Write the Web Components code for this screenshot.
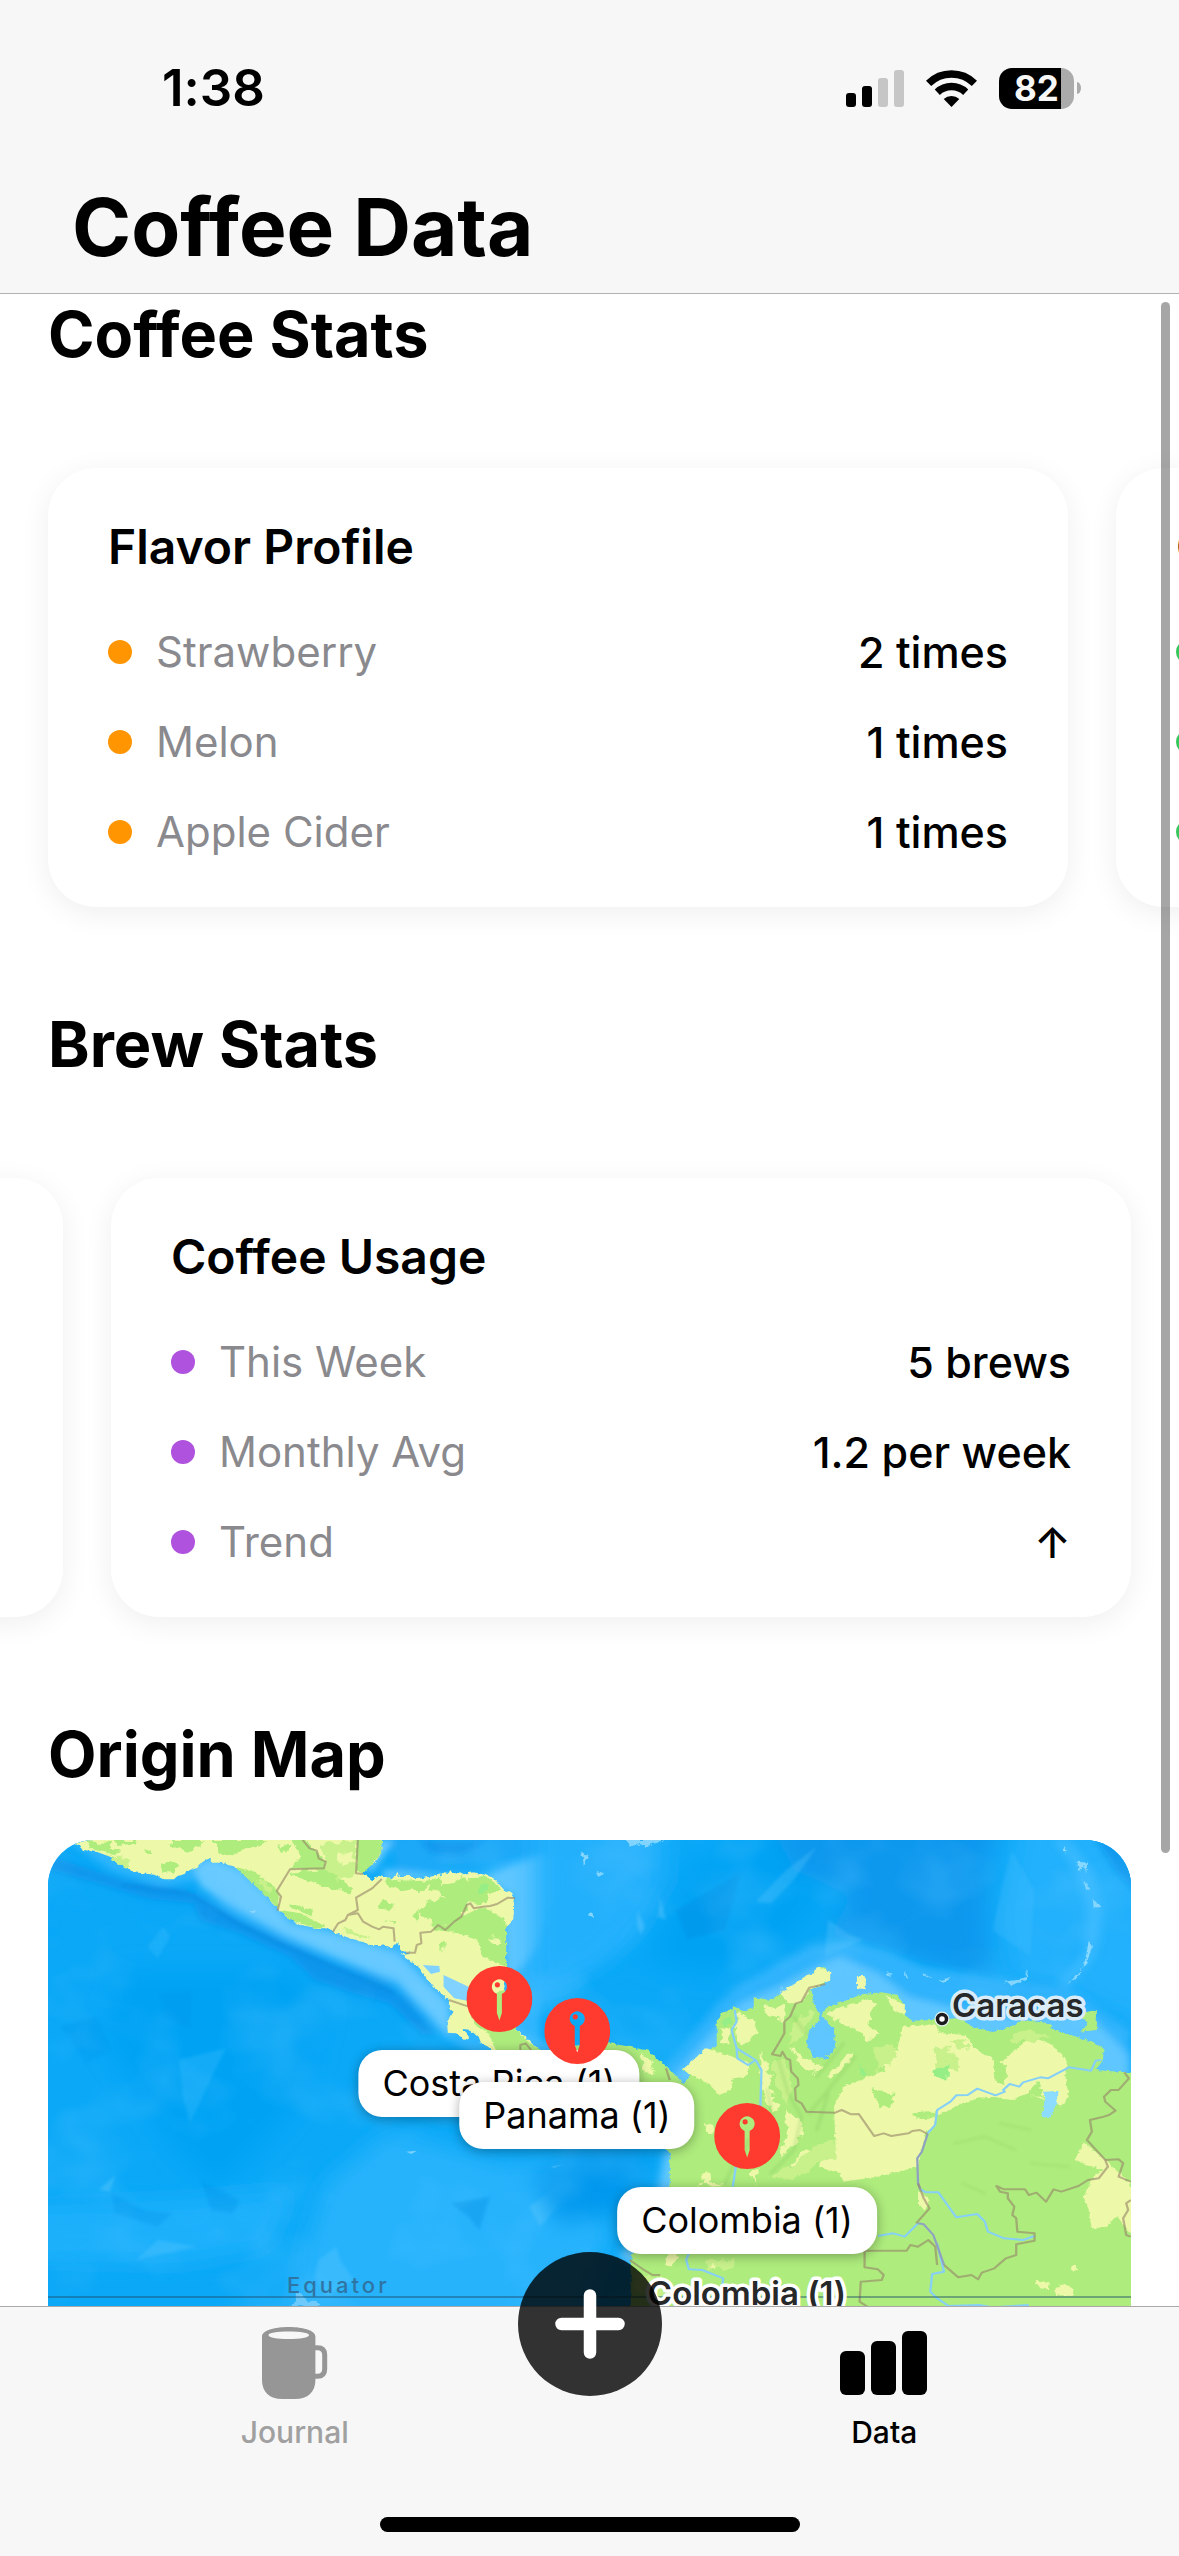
<!DOCTYPE html>
<html lang="en">
<head>
<meta charset="utf-8">
<meta name="viewport" content="width=device-width, initial-scale=1">
<title>Coffee Data</title>
<style>
  html, body { margin: 0; height: 100%; }
  body { font-family: Inter, "Liberation Sans", sans-serif; font-variant-ligatures: none; color: #000; background: #fff; }
</style>
</head>
<body>
<coffee-app></coffee-app>

<template id="t-app">
  <style>
    :host { display: flex; flex-direction: column; height: 100vh; overflow: hidden; background: #fff; }
    header { background: #f7f7f7; border-bottom: 1px solid #b2b2b2; }
    h1 { margin: 0; padding: 0 72px 15px; font-size: 80px; line-height: 102px; font-weight: 700; }
    main { position: relative; flex: 1; min-height: 0; overflow: hidden; }
    .thumb { position: absolute; top: 8px; right: 9px; width: 9px; height: 1551px; border-radius: 5px; background: rgba(0,0,0,.35); }
  </style>
  <header>
    <status-bar></status-bar>
    <h1>Coffee Data</h1>
  </header>
  <main>
    <data-section heading="Coffee Stats">
      <card-carousel>
        <stat-card heading="Flavor Profile" color="#ff9500">
          <stat-row label="Strawberry" value="2 times"></stat-row>
          <stat-row label="Melon" value="1 times"></stat-row>
          <stat-row label="Apple Cider" value="1 times"></stat-row>
        </stat-card>
        <stat-card heading="Origins" color="#34c759">
          <stat-row></stat-row><stat-row></stat-row><stat-row></stat-row>
        </stat-card>
      </card-carousel>
    </data-section>
    <data-section heading="Brew Stats">
      <card-carousel at="end">
        <stat-card></stat-card>
        <stat-card heading="Coffee Usage" color="#af52de">
          <stat-row label="This Week" value="5 brews"></stat-row>
          <stat-row label="Monthly Avg" value="1.2 per week"></stat-row>
          <stat-row label="Trend" value="↑"></stat-row>
        </stat-card>
      </card-carousel>
    </data-section>
    <data-section heading="Origin Map">
      <origin-map>
        <map-pin style="--x:451px;--y:126px">Costa Rica (1)</map-pin>
        <map-pin style="--x:529px;--y:158px">Panama (1)</map-pin>
        <map-pin style="--x:699px;--y:263px">Colombia (1)</map-pin>
      </origin-map>
    </data-section>
    <div class="thumb"></div>
  </main>
  <tab-bar></tab-bar>
</template>

<template id="t-status">
  <style>
    :host { display: flex; align-items: center; justify-content: space-between; height: 176px; padding: 0 98px 0 162px; }
    .time { font-size: 51px; line-height: 60px; font-weight: 600; }
    .icons { display: flex; align-items: center; gap: 22px; }
    .battery { display: flex; align-items: center; gap: 3px; }
    .cell { width: 75px; height: 41px; border-radius: 13px; background: linear-gradient(90deg, #000 62px, #ababab 62px); color: #f7f7f7; font-size: 35px; line-height: 41px; font-weight: 700; text-align: center; }
    .nub { width: 4px; height: 12px; border-radius: 0 4px 4px 0 / 0 6px 6px 0; background: #ababab; }
    svg { display: block; }
  </style>
  <div class="time">1:38</div>
  <div class="icons">
    <svg width="58" height="37" viewBox="0 0 58 37" aria-hidden="true">
      <rect y="23" width="10" height="14" rx="3"/><rect x="16" y="16" width="10" height="21" rx="3"/>
      <rect x="32" y="8" width="10" height="29" rx="3" fill="#c6c6c6"/><rect x="48" width="10" height="37" rx="3" fill="#c6c6c6"/>
    </svg>
    <svg width="51" height="37" viewBox="0 0 51 37" aria-hidden="true">
      <g fill="none" stroke="#000" stroke-width="7.4">
        <path d="M2.6 13.4A32.6 32.6 0 0 1 48.4 13.4"/><path d="M11.3 22.2A20.6 20.6 0 0 1 39.700 22.200"/>
      </g>
      <path d="M25.500 37L17.700 29A11.500 11.500 0 0 1 33.300 29Z"/>
    </svg>
    <div class="battery"><div class="cell">82</div><div class="nub"></div></div>
  </div>
</template>

<template id="t-section">
  <style>
    :host { display: block; padding-bottom: 96px; }
    h2 { margin: 0; padding: 0 48px; font-size: 63px; line-height: 80px; font-weight: 700; }
  </style>
  <h2></h2>
  <slot></slot>
</template>

<template id="t-carousel">
  <style>
    :host { display: flex; gap: 48px; padding: 94px 48px 61px; margin-bottom: -60px; overflow: hidden; }
    :host([at="end"]) { justify-content: flex-end; }
  </style>
  <slot></slot>
</template>

<template id="t-card">
  <style>
    :host { display: flex; flex-direction: column; flex: 0 0 calc(100% - 63px); box-sizing: border-box; padding: 48px 60px; border-radius: 48px; background: #fff; box-shadow: 0 6px 30px rgba(0,0,0,.065); }
    h3 { margin: 0 0 48px; font-size: 48px; line-height: 61px; font-weight: 600; }
    .rows { display: flex; flex-direction: column; gap: 36px; }
  </style>
  <h3></h3>
  <div class="rows"><slot></slot></div>
</template>

<template id="t-row">
  <style>
    :host { display: flex; align-items: center; height: 54px; font-size: 43px; line-height: 54px; }
    i { width: 24px; height: 24px; border-radius: 50%; background: var(--dot); margin-right: 24px; }
    .label { flex: 1; color: #8a8a8e; font-size: 42px; }
    .value { font-weight: 500; }
  </style>
  <i></i><span class="label"></span><span class="value"></span>
</template>

<template id="t-pin">
  <style>
    :host { position: absolute; left: var(--x); top: var(--y); transform: translateX(-50%); display: flex; flex-direction: column; align-items: center; gap: 18px; }
    span { padding: 0 24px; border-radius: 24px; background: #fff; font-size: 36px; line-height: 67px; white-space: nowrap; box-shadow: 0 2px 12px rgba(0,0,0,.33); }
    svg { display: block; }
  </style>
  <svg width="66" height="66" viewBox="-33 -33 66 66" aria-hidden="true">
    <path fill="#ff3b30" fill-rule="evenodd" d="M-33 0A33 33 0 1 0 33 0A33 33 0 1 0-33 0ZM-2.500-5.100A7.500 7.500 0 1 1 2.500-5.100L2.500 14L0 21.500L-2.500 14ZM-4.600-14.200A2.600 2.600 0 1 0 .6-14.200A2.600 2.600 0 1 0-4.600-14.200Z"/>
  </svg>
  <span><slot></slot></span>
</template>

<template id="t-map">
  <style>
    :host { display: block; position: relative; height: 900px; margin: 46px 48px 0; border-radius: 46px; overflow: hidden; background: #0aa8f7; }
    svg { display: block; width: 100%; height: 100%; }
    text { font-family: Inter, "Liberation Sans", sans-serif; }
    .place { font-size: 33px; font-weight: 600; fill: #26282a; stroke-width: 7px; stroke-linejoin: round; paint-order: stroke; }
    .line { font-size: 22px; font-weight: 500; letter-spacing: 3px; fill: #2f74a3; }
  </style>
  <svg viewBox="0 0 1083 900" preserveAspectRatio="xMinYMin slice" role="img" aria-label="Map of coffee origins">
    <defs>
      <filter id="b0" x="-20%" y="-20%" width="140%" height="140%"><feGaussianBlur stdDeviation="4"/></filter>
      <filter id="b1" x="-20%" y="-20%" width="140%" height="140%"><feGaussianBlur stdDeviation="11"/></filter>
      <filter id="b2" x="-20%" y="-20%" width="140%" height="140%"><feGaussianBlur stdDeviation="32"/></filter>
      <filter id="rough" x="-5%" y="-5%" width="110%" height="110%" color-interpolation-filters="sRGB">
        <feTurbulence type="fractalNoise" baseFrequency=".035" numOctaves="3" seed="4"/>
        <feDisplacementMap in="SourceGraphic" scale="34" xChannelSelector="R" yChannelSelector="G"/>
      </filter>
      <filter id="coast" x="-5%" y="-5%" width="110%" height="110%" color-interpolation-filters="sRGB">
        <feTurbulence type="fractalNoise" baseFrequency=".09" numOctaves="2" seed="9"/>
        <feDisplacementMap in="SourceGraphic" scale="12" xChannelSelector="R" yChannelSelector="G"/>
      </filter>
      <filter id="swell" x="0" y="0" width="100%" height="100%" color-interpolation-filters="sRGB">
        <feTurbulence type="fractalNoise" baseFrequency=".011 .014" numOctaves="3" seed="21"/>
        <feColorMatrix values="0 0 0 0 .38  0 0 0 0 .78  0 0 0 0 1  2.600 0 0 0 -1.250"/>
      </filter>
    </defs>
    <rect width="1083" height="900" fill="#0aa8f7"/>

    <!-- sea floor, west -->
    <g transform="translate(-8 -10) scale(.35714 .33333)">
      <g filter="url(#b2)">
        <path fill="#00a3f4" d="M230 420L700 420L800 520L740 800L620 950L500 1080L380 960L180 640Z"/>
        <path fill="#26b3fc" d="M800 1060L980 900L1180 960L1300 1000L1500 980L1600 1200L1500 1500L700 1500L740 1260Z"/>
        <path fill="#1fb0fb" d="M-60 1130L400 1110L700 1080L640 1250L400 1300L-60 1290Z"/>
        <path fill="#2db5ff" d="M1260 90L1640 -40L1680 300L1520 400L1420 520L1280 540Z"/>
      </g>
      <g filter="url(#b1)">
        <path fill="#1ba9f8" d="M980 20L1500 20L1400 70L1200 110L1000 120Z"/>
        <path fill="#0b95ee" d="M1060 30L1250 30L1180 75L1100 70Z"/>
        <path fill="#2fb5fd" d="M60 20L200 120L340 170L440 150L520 240L680 330L850 400L1000 470L1130 620L1400 800L1400 300L500 40Z"/>
        <path fill="#0c95ec" d="M0 60L60 90L230 150L400 178L450 200L560 270L680 330L820 400L960 450L1030 510L1110 612L1070 612L980 520L880 490L770 450L700 380L560 310L450 270L430 220L300 205L180 165L0 110Z"/>
        <path fill="#68caff" d="M430 110L480 85L560 120L640 200L700 280L820 310L1000 370L1140 520L1150 620L1080 540L1000 450L850 390L680 310L560 240L450 170Z"/>
        <path fill="#5ec6ff" d="M960 118L1100 130L1250 135L1310 110L1400 80L1490 75L1485 160L1430 230L1400 340L1350 410L1310 450L1300 260L1330 200L1240 145L960 150Z"/>
        <path fill="#6ccbff" d="M950 30L990 30L960 80L930 125L910 125Z"/>
        <path fill="#41bcff" d="M1290 560L1380 620L1460 660L1568 640L1568 700L1300 700Z"/>
      </g>
      <path filter="url(#b0)" fill="none" stroke="#0787de" stroke-width="8" opacity=".5" d="M230 165L420 192L560 285L700 355L860 430L990 490"/>
      <g opacity=".3" filter="url(#b0)">
        <path fill="#0096ea" d="M60 590L160 560L200 660L130 700Z"/>
        <path fill="#0096ea" d="M330 490L425 480L425 600L350 560Z"/>
        <path fill="#40bfff" d="M300 350L345 290L365 320L330 385Z"/>
        <path fill="#40bfff" d="M390 690L520 655L490 720L420 880L400 800Z"/>
        <path fill="#0092e8" d="M200 1090L290 1140L370 1150L330 1190L210 1150Z"/>
        <path fill="#0092e8" d="M450 1050L560 1110L540 1150L480 1140Z"/>
        <path fill="#7bd4ff" d="M165 1080L212 1035L195 1085Z"/>
        <path fill="#62caff" d="M330 1230L440 1250L350 1270L270 1290Z"/>
        <path fill="#7bd4ff" d="M1370 1130L1480 1040L1540 1010L1450 1130L1400 1190Z"/>
        <path fill="#0088dd" d="M1150 1120L1260 1100L1230 1200L1200 1160Z"/>
        <path fill="#62caff" d="M770 1340L780 1290L830 1250L840 1290L880 1350L800 1400Z"/>
        <path fill="#b0e6ff" d="M1505 60L1535 65L1535 110L1520 120Z"/>
      </g>
      <path fill="#a5dcfa" opacity=".6" filter="url(#rough)" d="M706 1432L712 1405L735 1390L745 1415L775 1410L790 1432Z"/>
      <path fill="#9cdcff" opacity=".7" d="M1025 965L1055 962L1040 972ZM1430 1010L1465 1003L1440 1014ZM585 245L605 240L600 250ZM1470 140L1490 150L1488 170L1478 150ZM1478 235L1478 270L1462 270L1474 266ZM1545 245L1556 258L1538 260Z"/>
    </g>

    <!-- sea floor, east -->
    <g transform="translate(532 -10) scale(.38197 .33333)">
      <g filter="url(#b2)">
        <path fill="#22b0fc" d="M-120 -20L230 -20L220 160L160 280L60 400L-120 500Z"/>
        <path fill="#00a3f4" d="M280 100L560 20L640 200L560 330L340 440L180 400L220 260Z"/>
        <path fill="#0d98ee" d="M480 -60L1110 -60L1060 120L1070 440L900 395L740 330L640 320L720 200L560 120Z"/>
        <path fill="#22b1fc" d="M1150 -60L1460 -60L1520 620L1260 480L1120 440L1100 260Z"/>
        <path fill="#0098ee" d="M40 940L180 980L150 1080L90 1150L-60 1180L-120 1040Z"/>
      </g>
      <g filter="url(#b1)">
        <path fill="#0d98ee" d="M1340 0L1460 0L1460 190L1400 120Z"/>
        <path fill="#2fb3fc" d="M200 740L290 620L360 520L420 460L520 400L600 350L700 330L820 370L900 410L1020 430L1120 450L1280 470L1440 600L1440 800L900 700L300 800Z"/>
        <path fill="#5fc6ff" d="M230 760L290 680L360 590L420 520L520 470L600 420L680 380L780 430L860 500L1000 540L1120 560L1250 540L1340 560L1440 680L1440 800L900 700L300 800Z"/>
        <path fill="#37b9ff" d="M1240 30L1280 30L1340 120L1370 240L1350 380L1280 470L1250 460L1320 370L1330 240L1290 110Z"/>
        <path fill="#62c8ff" d="M260 960L222 960L205 1080L165 1190L100 1280L160 1320L260 1250Z"/>
      </g>
      <g fill="#a9e4ff" opacity=".75" filter="url(#coast)">
        <path d="M120 30L220 30L190 42L175 50L160 42L130 50ZM0 65L22 75L10 110L8 85ZM40 125L65 132L48 140ZM20 255L30 245L38 265Z"/>
        <path d="M1300 95L1330 98L1325 130L1318 105L1308 125ZM1265 45L1275 60L1268 68ZM1318 150L1336 178L1325 180ZM1342 205L1362 230L1345 235ZM1332 330L1340 350L1325 405L1318 410L1328 360ZM1318 412L1300 445L1275 460L1295 442Z"/>
        <path d="M800 425L820 435L808 438ZM850 420L860 448L852 440ZM895 430L925 445L900 438ZM940 452L970 440L955 460ZM1110 455L1160 448L1172 420L1170 450L1130 464ZM530 465L525 490L515 510Z"/>
      </g>
      <g opacity=".28" filter="url(#b0)">
        <path fill="#69ccff" d="M540 120L620 50L560 150L500 220L460 215Z"/>
        <path fill="#0086dc" d="M250 240L420 130L380 300L280 330Z"/>
        <path fill="#48c0ff" d="M1130 60L1190 180L1180 380L1080 300Z"/>
        <path fill="#8cd8ff" d="M150 240L170 290L160 315L150 290ZM210 200L225 270L205 260Z"/>
        <path fill="#69ccff" d="M650 270L700 310L740 330L640 380Z"/>
      </g>
    </g>
    <rect width="1083" height="480" filter="url(#swell)" opacity=".3"/>

    <!-- Central America -->
    <g transform="translate(-8 -10) scale(.35714 .33333)">
     <g filter="url(#coast)">
      <path fill="#edf9a9" d="M70 20L85 42L112 45L120 60L160 66L200 82L212 92L240 110L260 126L320 134L345 148L375 148L385 138L405 132L410 124L440 114L455 96L475 84L485 98L510 98L545 110L570 130L600 160L625 185L650 220L670 240L690 262L730 285L770 293L815 296L830 310L860 322L900 335L925 345L955 345L985 352L1000 335L1010 362L1040 368L1012 372L1040 395L1060 410L1080 440L1100 468L1145 510L1145 535L1158 545L1140 575L1142 608L1165 610L1190 630L1202 622L1183 597L1205 600L1230 625L1235 640L1255 650L1290 690L1400 740L1568 780L1568 700L1440 690L1390 655L1360 620L1330 598L1310 560L1300 480L1305 400L1305 290L1325 268L1328 225L1322 188L1300 180L1285 162L1270 145L1250 135L1210 127L1180 134L1130 127L1120 135L1060 146L1040 138L1005 138L1000 128L985 148L955 135L930 150L905 130L912 115L940 95L955 70L958 20Z"/>
      <g fill="#aeec7d">
        <path d="M700 20L735 20L770 60L800 95L795 118L700 118L730 80Z"/><path d="M885 20L958 20L955 70L935 95L905 130L885 120Z"/>
        <path d="M545 110L600 125L650 165L668 190L668 240L640 205L590 155Z"/><path d="M670 240L730 250L800 290L770 293L700 270Z"/>
        <path d="M1110 300L1200 250L1240 230L1300 265L1305 290L1305 410L1240 380L1225 330L1170 310Z"/>
        <path d="M1200 520L1300 480L1330 598L1390 655L1440 690L1290 690L1255 610L1215 580Z"/>
      </g>
     </g>
     <g filter="url(#rough)">
      <g fill="#c8f18b">
        <path d="M780 40L885 30L885 135L820 150L795 118L800 90Z"/><path d="M180 72L250 90L250 112L205 88Z"/>
        <path d="M840 290L900 310L915 330L862 314Z"/><path d="M600 140L655 175L650 195L610 160Z"/>
      </g>
      <g fill="#aeec7d">
        <path d="M125 35L200 35L190 55L230 65L215 75L160 62L135 52Z"/><path d="M210 30L275 30L270 42L215 45Z"/>
        <path d="M365 30L460 30L445 52L410 65L360 45Z"/><path d="M480 30L640 30L620 45L560 60L540 82L500 60Z"/>
        <path d="M340 105L365 92L385 110L370 125L335 122Z"/><path d="M292 62L310 58L312 75L296 74Z"/>
        <path d="M700 125L795 118L870 170L860 190L780 165L730 150Z"/><path d="M700 220L770 240L765 260L690 235Z"/>
        <path d="M970 145L1010 155L1100 150L1125 140L1120 165L1190 145L1250 142L1300 182L1260 190L1235 225L1195 220L1180 260L1110 300L1060 240L1080 220L1130 200L1090 165L1060 190L980 170Z"/>
        <path d="M945 235L975 205L990 220L975 250ZM1040 255L1060 240L1062 270L1045 275ZM1122 345L1135 330L1140 352L1125 360ZM970 272L992 268L985 285Z"/>
        <path d="M665 40L705 48L690 65Z"/>
      </g>
      <path fill="#edf9a9" d="M830 70L875 65L880 100L850 105ZM1250 325L1290 320L1290 345ZM1270 200L1315 235L1310 262L1275 235ZM1150 130L1180 140L1165 160L1145 155Z"/>
      <path fill="#95ee86" d="M1230 170L1255 165L1250 185L1228 190Z"/>
     </g>
      <g fill="#81d2ff"><path d="M1072 405L1118 408L1120 425L1095 432Z"/><path d="M1130 435L1200 470L1210 515L1160 505L1130 470Z"/></g>
    </g>

    <!-- South America -->
    <g transform="translate(532 -10) scale(.38197 .33333)">
     <g filter="url(#coast)">
      <path fill="#aeec7d" d="M-60 650L80 640L130 650L180 662L200 685L225 710L245 730L272 762L290 735L268 720L300 690L320 665L358 650L358 570L375 548L405 530L430 545L455 530L455 502L500 510L530 485L580 465L595 435L615 430L620 412L640 412L655 435L640 462L605 475L612 520L625 550L630 570L600 600L593 640L610 683L650 688L668 650L665 600L650 580L632 555L650 530L700 510L740 492L790 487L830 495L850 525L850 555L870 572L925 570L990 565L1030 590L1080 606L1120 594L1160 570L1230 580L1240 600L1300 620L1340 635L1370 655L1370 690L1350 720L1410 725L1470 730L1470 1700L133 1700L133 1275L180 1240L215 1200L235 1060L235 970L215 940L180 850L130 740L80 710L-60 740Z"/>
      <g fill="#edf9a9">
        <path d="M525 490L595 435L615 430L620 412L655 425L655 450L605 475L580 520L545 520Z"/><path d="M725 438L748 438L748 478L725 475Z"/>
        <path d="M270 718L330 655L400 680L445 700L435 740L400 745L395 780L365 795L340 765L300 740Z"/>
        <path d="M800 495L850 525L850 555L820 540Z"/>
        <path d="M845 590L930 583L945 610L1010 615L1030 650L1100 700L1180 620L1230 640L1275 690L1270 735L1280 800L1260 830L1170 790L1130 810L1060 800L1010 815L930 860L930 890L905 905L885 1010L780 1040L690 1055L680 1030L625 1010L630 990L670 985L665 830L690 770L800 720L780 680L830 660Z"/>
        <path d="M1320 935L1375 990L1440 1060L1470 1250L1425 1190L1405 1155L1380 1190L1340 1195L1330 1130L1318 1100L1345 1040L1370 1020L1295 990Z"/>
        <path d="M885 1080L915 1110L905 1145L885 1120ZM325 880L350 885L350 915L330 905Z"/>
        <path d="M1190 1350L1228 1360L1225 1378L1205 1375ZM1245 1375L1265 1360L1292 1375L1290 1398L1245 1395ZM1285 1312L1294 1302L1302 1318L1292 1328Z"/>
      </g>
      <path fill="#aeec7d" d="M1305 550L1353 540L1353 600L1310 605L1330 580Z"/>
      <path fill="#8bdcff" d="M1215 785L1250 783L1248 820L1230 865L1205 860L1215 830Z"/>
     </g>
     <g filter="url(#rough)">
      <g fill="#c8f18b">
        <path d="M920 660L965 650L990 690L990 720L930 730ZM960 640L1010 625L1015 660Z"/><path d="M765 650L830 640L820 700L780 720Z"/>
        <path d="M500 700L530 690L560 760L540 830L520 790Z"/><path d="M610 950L665 930L670 985L625 990L590 1040L500 1045L550 1005Z"/>
        <path d="M1170 600L1240 620L1190 630L1130 640L1120 625Z"/>
        <path d="M330 1290L410 1285L400 1315L330 1320Z"/><path d="M150 1330L230 1350L210 1400L140 1380Z"/>
        <path d="M560 580L600 540L610 560L580 620L545 650Z"/>
      </g>
      <g fill="#edf9a9">
        <path d="M408 550L450 560L468 600L435 645L410 635L405 590ZM370 595L392 600L388 640L372 640Z"/>
        <path d="M480 530L540 525L530 570L490 560Z"/><path d="M650 550L745 508L768 520L755 580L790 620L740 625L700 580L665 570Z"/>
        <path d="M555 650L610 700L640 710L620 735L580 715Z"/><path d="M650 735L700 670L720 665L700 705L655 750Z"/>
        <path d="M470 670L495 720L500 790L525 830L505 850L485 800L470 770Z"/>
        <path d="M545 830L560 870L590 890L565 940L525 985L545 900L535 860Z"/>
        <path d="M545 1000L605 950L600 962L558 1003Z"/>
        <path d="M325 1030L340 1020L335 1055L380 1065L315 1068ZM450 1030L465 1005L460 1060Z"/>
        <path d="M225 1280L262 1275L245 1300L220 1300ZM340 1310L360 1305L355 1325ZM160 675L190 690L195 730L160 725Z"/>
      </g>
      <path fill="#aeec7d" d="M765 775L820 785L820 815L790 835L770 800ZM870 855L900 847L930 850L925 860L875 862ZM640 690L700 650L690 680ZM1080 680L1115 700L1115 760L1085 750ZM1170 800L1200 750L1210 800Z"/>
      <path fill="#95ee86" d="M920 725L965 700L962 745L925 745ZM725 705L750 725L740 735ZM368 578L398 555L398 590L372 590Z"/>
     </g>
    </g>
    <!-- relief shading over the Andes -->
    <g transform="translate(532 -10) scale(.38197 .33333)" fill="none" stroke="#79b957" stroke-width="9" opacity=".24" stroke-linecap="round" filter="url(#b0)">
      <path d="M520 690L545 790L580 860L560 960L500 1030M490 780L510 900L470 1000M690 640L620 740M720 680L650 780L600 850M440 930L420 1010M400 1010L380 1060M560 560L590 610M650 790L620 900"/>
      <path d="M980 940L1060 920L1140 960M1100 880L1180 900M1000 1060L1060 1090M1180 1000L1280 1010" stroke-width="5"/>
    </g>

    <!-- rivers -->
    <g fill="none" stroke="#86d0f7" stroke-linejoin="round" stroke-width="6" transform="translate(532 -10) scale(.38197 .33333)">
      <path d="M405 540L410 575L397 600L410 655L460 690L475 720L472 840M410 655L412 685L440 705L460 690M408 1010L400 1070M285 1270L278 1290L285 1318L320 1320L375 1345L372 1370"/>
      <path d="M1365 690L1350 692L1338 722L1280 712L1225 745L1205 742L1160 757L1150 770L1125 762L1108 780L1112 785L1088 796L1040 776L1015 795L985 796L970 815L935 840L930 885L910 910"/>
      <path d="M888 1075L905 1087L938 1087L985 1162L1040 1152L1060 1175L1068 1205L1110 1225L1160 1230L1190 1218M780 1218L820 1210L850 1220L885 1180M935 1240L953 1325L922 1332L917 1385L935 1405L965 1428L1045 1425L1080 1432L1175 1425"/>
      <path stroke="#8fa3c0" d="M910 912L895 965L883 985L885 1060L890 1075M885 1180L900 1183L925 1215L933 1240L953 1305"/>
    </g>
    <!-- country borders -->
    <g fill="none" stroke="#98866b" stroke-opacity=".62" stroke-linejoin="round">
      <g transform="translate(-8 -10) scale(.35714 .33333)" stroke-width="6">
        <path d="M735 30L755 55L775 62L780 85L800 95L795 115L700 118L663 183L675 200L665 242M890 30L885 130L905 132M957 147L930 175L885 203L890 240L862 255L855 270L835 280L820 305M862 255L890 250L905 275L930 290L950 298L960 290L990 295L993 335M1330 205L1310 203L1280 222L1260 228L1240 230L1215 235L1205 220L1195 225L1180 260L1160 275L1135 300L1115 285L1095 305L1065 308L1068 340L1055 345L1050 368L1025 368M1145 510L1200 530M1345 660L1345 645L1360 640L1375 660"/>
      </g>
      <g transform="translate(532 -10) scale(.38197 .33333)" stroke-width="6">
        <path d="M642 462L600 473L580 515L565 520L550 560L535 575L535 610L520 640L503 673L525 678L530 665L540 685L550 690L553 725L570 745L572 765L563 775L565 810L580 820L593 845L668 848L685 840L710 853L730 852L770 918L795 910L815 918L860 910L870 903L890 900L910 912M885 1060L900 1105L915 1135L880 1180M953 1305L990 1342L1025 1335L1042 1348L1052 1328L1085 1315L1115 1285L1142 1275L1142 1243L1190 1232L1190 1210L1145 1205L1142 1165L1132 1155L1137 1130L1120 1105L1120 1090L1100 1085L1090 1068L1110 1078L1165 1078L1175 1095L1195 1088L1220 1115L1240 1078L1260 1085L1305 1068L1330 1050L1358 1045L1382 1010L1375 990L1327 930L1340 905L1335 870L1365 862L1385 855L1402 842L1375 815L1372 800L1390 780L1410 780L1437 745L1425 727"/>
        <path d="M1375 990L1410 988L1422 1000L1410 1040L1442 1055M1442 1110L1430 1120L1435 1140L1422 1165L1430 1215L1442 1220M935 1305L930 1250L912 1230L885 1250L865 1245L855 1262L745 1262L745 1312L780 1318L795 1335L790 1350L735 1355L732 1415L755 1432M130 1290L165 1318L190 1335L210 1335M225 715L235 750"/>
      </g>
    </g>

    <path d="M0 457H1083" stroke="#1d4d6b" stroke-opacity=".45" stroke-width="2"/>
    <text class="line" x="239" y="453">Equator</text>
    <circle cx="894" cy="179" r="7.500" fill="#e4f2ec"/>
    <circle cx="894" cy="179" r="4.500" fill="#fff" stroke="#1c1c1e" stroke-width="3.500"/>
    <text class="place" x="904" y="177" stroke="#d9ecf7">Caracas</text>
    <text class="place" x="699" y="465" text-anchor="middle" stroke="#fff">Colombia (1)</text>
  </svg>
  <slot></slot>
</template>

<template id="t-tabs">
  <style>
    :host { display: block; position: relative; height: 249px; background: #f7f7f7; border-top: 1px solid #a9a9a9; }
    nav { display: grid; grid-template-columns: 1fr 1fr; padding-top: 20px; }
    button { font: inherit; border: 0; padding: 0; background: none; cursor: pointer; }
    .tab { display: flex; flex-direction: column; align-items: center; gap: 15px; color: #000; font-size: 30px; line-height: 36px; font-weight: 500; }
    .off { color: #a0a0a0; }
    .add { position: absolute; left: 50%; top: -55px; transform: translateX(-50%); width: 144px; height: 144px; border-radius: 50%; background: rgba(0,0,0,.8); display: grid; place-items: center; }
    .home { position: absolute; left: 50%; bottom: 24px; transform: translateX(-50%); width: 420px; height: 15px; border-radius: 8px; background: #000; }
    svg { display: block; }
  </style>
  <nav>
    <button class="tab off" type="button">
      <svg width="66" height="72" viewBox="0 0 66 72" aria-hidden="true">
        <path fill="#969696" fill-rule="evenodd" d="M0 9.500C0 3.500 12 0 26.700 0S53.400 3.500 53.400 9.500V53C53.400 65 46 72 33 72H20.400C7.400 72 0 65 0 53ZM6.500 8.200C6.500 10.600 15 12 26.700 12S47 10.600 47 8.200S38.400 4.600 26.700 4.600S6.500 5.800 6.500 8.200Z"/>
        <path fill="none" stroke="#969696" stroke-width="5" d="M53 20.700H55.500Q62.700 20.700 62.700 28V42Q62.700 49.300 55.500 49.300H53"/>
      </svg>
      Journal
    </button>
    <button class="tab" type="button">
      <svg width="88" height="72" viewBox="0 0 88 72" aria-hidden="true">
        <rect x="0" y="24" width="25" height="44" rx="6"/><rect x="31" y="14" width="25" height="54" rx="6"/><rect x="62" y="4" width="25" height="64" rx="6"/>
      </svg>
      Data
    </button>
  </nav>
  <button class="add" type="button" aria-label="Add">
    <svg width="70" height="70" viewBox="0 0 70 70" aria-hidden="true"><path d="M35 6.500V63.500M6.500 35H63.500" stroke="#fff" stroke-width="12.500" stroke-linecap="round"/></svg>
  </button>
  <div class="home"></div>
</template>

<script>
  class Base extends HTMLElement {
    constructor() {
      super();
      this.attachShadow({ mode: "open" })
        .append(document.getElementById(this.constructor.tpl).content.cloneNode(true));
    }
    fill(selector, attribute) {
      this.shadowRoot.querySelector(selector).textContent = this.getAttribute(attribute) || "";
    }
  }
  const plain = (name, tpl) => customElements.define(name, class extends Base { static tpl = tpl; });

  plain("status-bar", "t-status");
  plain("card-carousel", "t-carousel");
  plain("map-pin", "t-pin");
  plain("origin-map", "t-map");
  plain("tab-bar", "t-tabs");

  customElements.define("data-section", class extends Base {
    static tpl = "t-section";
    connectedCallback() { this.fill("h2", "heading"); }
  });
  customElements.define("stat-card", class extends Base {
    static tpl = "t-card";
    connectedCallback() {
      this.fill("h3", "heading");
      this.style.setProperty("--dot", this.getAttribute("color") || "transparent");
    }
  });
  customElements.define("stat-row", class extends Base {
    static tpl = "t-row";
    connectedCallback() { this.fill(".label", "label"); this.fill(".value", "value"); }
  });
  plain("coffee-app", "t-app");
</script>
</body>
</html>
